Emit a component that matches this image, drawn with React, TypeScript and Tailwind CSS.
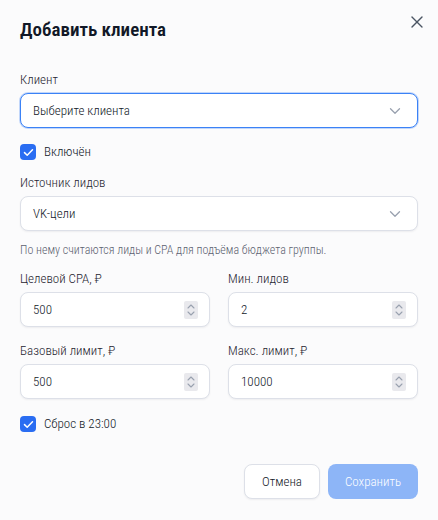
import { X } from "lucide-react"

function Chevron() {
  return (
    <svg width="12" height="8" viewBox="0 0 12 8" fill="none" className="text-gray-400">
      <path d="M1.5 1.75L6 6.25L10.5 1.75" stroke="currentColor" strokeWidth="1.3" strokeLinecap="round" strokeLinejoin="round" />
    </svg>
  )
}

// mimics the native number spin button
function Spinner() {
  return (
    <div className="flex h-[18px] w-[14px] flex-col items-center justify-center gap-[2px] rounded-[2px] bg-[#e9e9ed]">
      <svg width="8" height="5" viewBox="0 0 8 5" fill="none" className="text-gray-400">
        <path d="M1 4L4 1L7 4" stroke="currentColor" strokeWidth="1.1" strokeLinecap="round" strokeLinejoin="round" />
      </svg>
      <svg width="8" height="5" viewBox="0 0 8 5" fill="none" className="text-gray-400">
        <path d="M1 1L4 4L7 1" stroke="currentColor" strokeWidth="1.1" strokeLinecap="round" strokeLinejoin="round" />
      </svg>
    </div>
  )
}

function Checkbox({ label }: { label: string }) {
  return (
    <label className="flex h-5 items-center gap-2">
      <span className="flex h-4 w-4 items-center justify-center rounded-[4px] bg-[#2a6df2]">
        <svg width="11" height="9" viewBox="0 0 11 9" fill="none">
          <path d="M1.5 4.6L4.2 7.2L9.5 1.8" stroke="white" strokeWidth="1.5" strokeLinecap="round" strokeLinejoin="round" />
        </svg>
      </span>
      <span className="text-[13px] font-light text-[#111827]">{label}</span>
    </label>
  )
}

function Label({ children }: { children: React.ReactNode }) {
  return <div className="mb-[5px] text-[13px] leading-4 font-light text-[#1f2430]">{children}</div>
}

function NumberField({ label, value }: { label: string; value: string }) {
  return (
    <div>
      <Label>{label}</Label>
      <div className="flex h-[35px] items-center justify-between rounded-lg border border-[#dde0e8] bg-white pl-3 pr-[11px] shadow-[0_1px_2px_rgba(16,24,40,0.06)]">
        <span className="text-[13px] font-light text-[#111827]">{value}</span>
        <Spinner />
      </div>
    </div>
  )
}

export default function App() {
  return (
    <div className="relative min-h-[520px] w-[438px] bg-[#fbfbfc] px-5 pt-4 font-['Roboto_Condensed',sans-serif]">
      <button className="absolute right-[11px] top-[12px] text-[#4b5563]">
        <X className="h-5 w-5" strokeWidth={1.6} />
      </button>

      <h2 className="text-[19px] leading-7 font-semibold text-[#111827]">Добавить клиента</h2>

      <div className="mt-7">
        <Label>Клиент</Label>
        <div className="flex h-[35px] items-center justify-between rounded-lg border border-[#3b82f6] bg-white pl-3 pr-4 ring-1 ring-[#3b82f6]/30">
          <span className="text-[13px] font-light text-[#111827]">Выберите клиента</span>
          <Chevron />
        </div>
      </div>

      <div className="mt-[14px]">
        <Checkbox label="Включён" />
      </div>

      <div className="mt-[13px]">
        <Label>Источник лидов</Label>
        <div className="flex h-[35px] items-center justify-between rounded-lg border border-[#dde0e8] bg-white pl-3 pr-4 shadow-[0_1px_2px_rgba(16,24,40,0.06)]">
          <span className="text-[13px] font-light text-[#111827]">VK-цели</span>
          <Chevron />
        </div>
        <p className="mt-[11px] text-xs leading-4 font-light text-[#5b6270]">
          По нему считаются лиды и CPA для подъёма бюджета группы.
        </p>
      </div>

      <div className="mt-[13px] grid grid-cols-2 gap-x-[18px] gap-y-4">
        <NumberField label="Целевой CPA, ₽" value="500" />
        <NumberField label="Мин. лидов" value="2" />
        <NumberField label="Базовый лимит, ₽" value="500" />
        <NumberField label="Макс. лимит, ₽" value="10000" />
      </div>

      <div className="mt-[15px]">
        <Checkbox label="Сброс в 23:00" />
      </div>

      <div className="mt-[30px] flex justify-end gap-2">
        <button className="h-[35px] rounded-lg border border-[#dde0e8] bg-white px-[17px] text-[13px] font-light text-[#111827] shadow-[0_1px_2px_rgba(16,24,40,0.06)]">
          Отмена
        </button>
        <button className="h-[35px] rounded-lg bg-[#8db5f7] px-[17px] text-[13px] font-light text-white">
          Сохранить
        </button>
      </div>
    </div>
  )
}
